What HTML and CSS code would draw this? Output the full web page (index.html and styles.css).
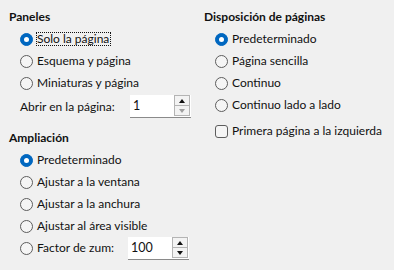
FILE: index.html
```html
<!DOCTYPE html>
<html lang="es">
<head>
<meta charset="utf-8">
<link rel="stylesheet" href="styles.css">
</head>
<body>
<div class="page">
  <div class="col col-left">
    <div class="head">Paneles</div>
    <div class="row"><span class="radio on"></span><span class="label focus">Solo la página</span></div>
    <div class="row"><span class="radio"></span><span class="label">Esquema y página</span></div>
    <div class="row"><span class="radio"></span><span class="label">Miniaturas y página</span></div>
    <div class="row spinrow">
      <span class="plainlabel">Abrir en la página:</span>
      <div class="spin"><span class="value">1</span><div class="btns"><span class="btn up"></span><span class="btn down disabled"></span></div></div>
    </div>
    <div class="head head2">Ampliación</div>
    <div class="row"><span class="radio on"></span><span class="label">Predeterminado</span></div>
    <div class="row"><span class="radio"></span><span class="label">Ajustar a la ventana</span></div>
    <div class="row"><span class="radio"></span><span class="label">Ajustar a la anchura</span></div>
    <div class="row"><span class="radio"></span><span class="label">Ajustar al área visible</span></div>
    <div class="row"><span class="radio"></span><span class="label zoomlabel">Factor de zum:</span>
      <div class="spin"><span class="value">100</span><div class="btns"><span class="btn up"></span><span class="btn down"></span></div></div>
    </div>
  </div>
  <div class="col col-right">
    <div class="head">Disposición de páginas</div>
    <div class="row"><span class="radio on"></span><span class="label">Predeterminado</span></div>
    <div class="row"><span class="radio"></span><span class="label">Página sencilla</span></div>
    <div class="row"><span class="radio"></span><span class="label">Continuo</span></div>
    <div class="row"><span class="radio"></span><span class="label">Continuo lado a lado</span></div>
    <div class="row checkrow"><span class="check"></span><span class="label">Primera página a la izquierda</span></div>
  </div>
</div>
</body>
</html>
```
FILE: styles.css
```css
html, body { margin: 0; padding: 0; }
body {
  background: #f0f0f0;
  color: #111;
  font-family: Lato, "Noto Sans", sans-serif;
  font-size: 12px;
  width: 394px;
  height: 270px;
  overflow: hidden;
}
.page { display: flex; padding-top: 6px; }
.col { display: flex; flex-direction: column; flex: none; }
.col-left { width: 186px; padding-left: 9px; }
.col-right { width: 181px; padding-left: 9px; }
.head { height: 22px; line-height: 22px; font-weight: bold; }
.head2 { margin-top: 9px; }
.row { height: 22px; display: flex; align-items: center; padding-left: 11px; white-space: nowrap; }
.radio {
  width: 11px; height: 11px; border-radius: 50%;
  border: 1px solid #5d5d5d; background: #f5f5f5;
  flex: none; position: relative;
}
.radio.on { background: #0067c0; border-color: #0067c0; }
.radio.on::after {
  content: ""; position: absolute; left: 3px; top: 3px;
  width: 5px; height: 5px; border-radius: 50%; background: #fff;
}
.label { margin-left: 3px; line-height: 12px; padding: 0 1px 0 0; border: 1px dotted transparent; }
.label.focus { border-color: #111; }
.spinrow { height: 24px; }
.plainlabel { width: 110px; flex: none; }
.zoomlabel { width: 89px; }
.spin {
  width: 61px; height: 22px; background: #fff;
  border-bottom: 1px solid #8a8a8a;
  display: flex; align-items: center; justify-content: space-between;
  flex: none;
}
.value { padding-left: 3px; font-size: 12.5px; }
.btns { display: flex; flex-direction: column; width: 16px; margin-right: 1px; height: 21px; }
.btn {
  flex: 1; border: 1px solid #b4b4b4; background: #f3f3f3;
  position: relative;
}
.btn + .btn { border-top: none; }
.btn::after {
  content: ""; position: absolute; left: 50%; top: 50%;
  margin-left: -3.5px; border-left: 3.5px solid transparent; border-right: 3.5px solid transparent;
}
.btn.up::after { border-bottom: 4px solid #111; margin-top: -2px; }
.btn.down::after { border-top: 4px solid #111; margin-top: -2px; }
.btn.down.disabled::after { border-top-color: #a0a0a0; }
.checkrow { margin-top: 4px; }
.check {
  width: 11px; height: 11px; border: 1px solid #5d5d5d; border-radius: 3px;
  background: #f5f5f5; flex: none;
}
```
